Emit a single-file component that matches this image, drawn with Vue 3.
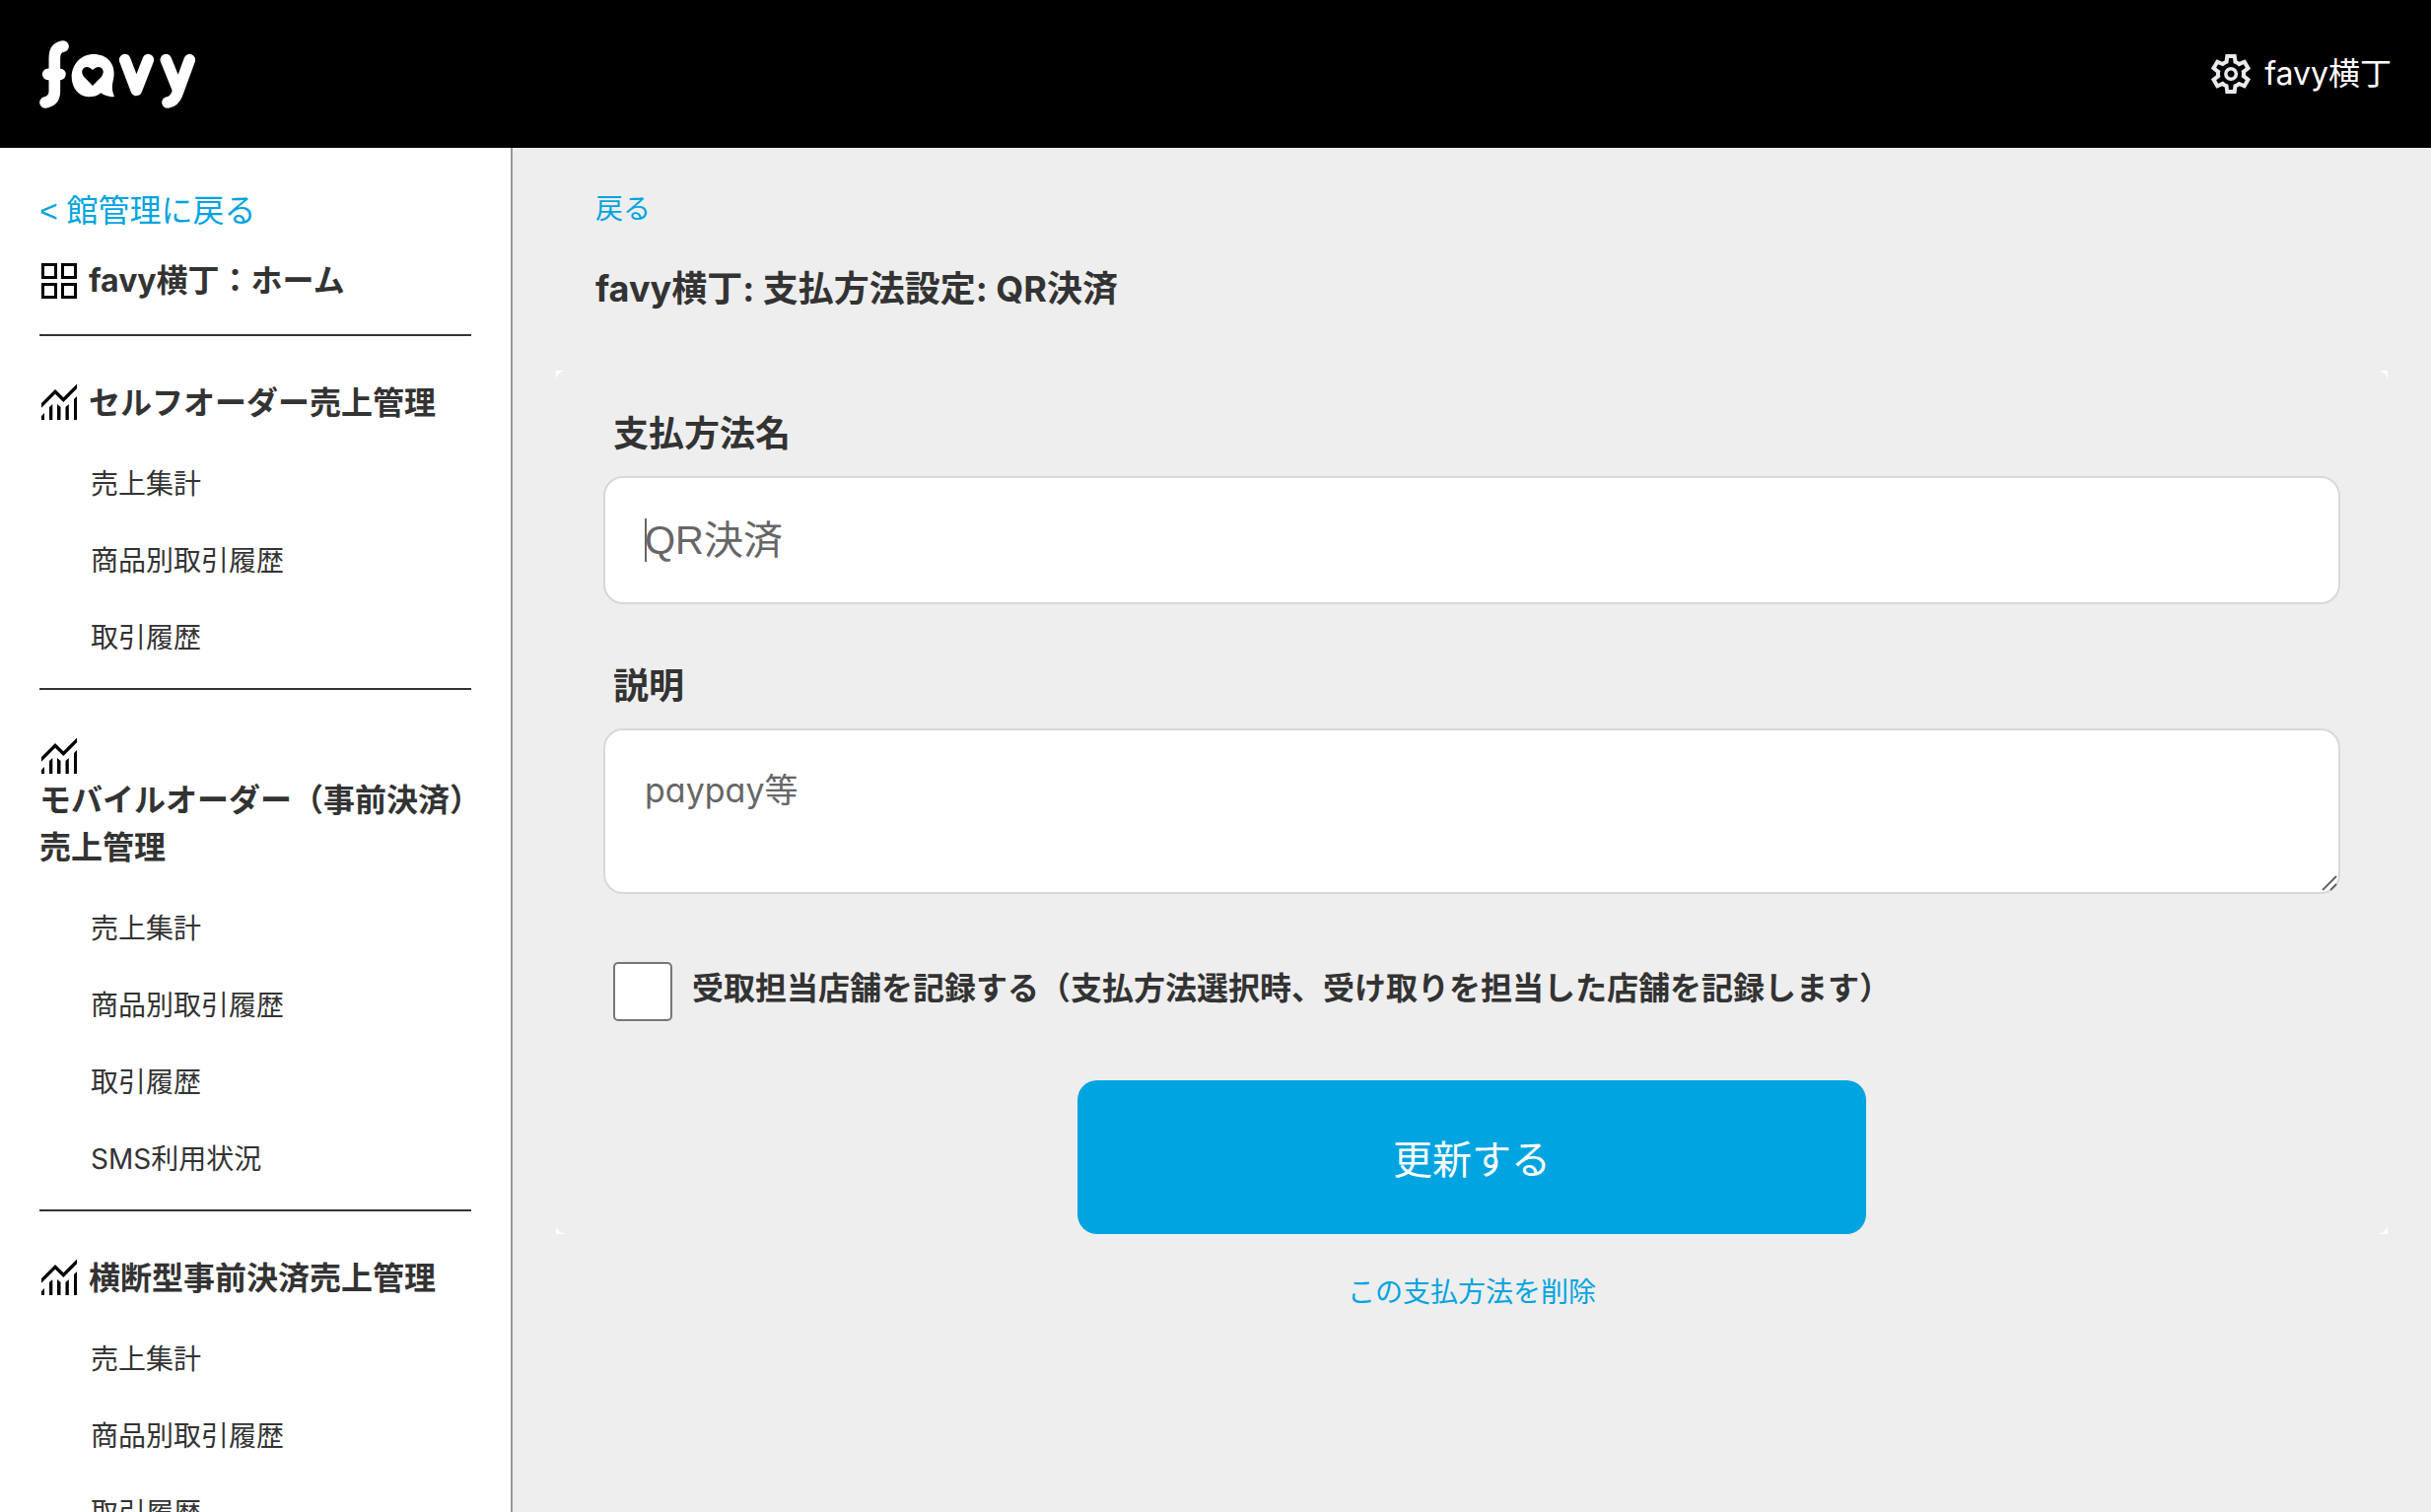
<script setup>
import { ref } from 'vue'

const sections = [
  { title: 'セルフオーダー売上管理', items: ['売上集計', '商品別取引履歴', '取引履歴'] },
  { title: 'モバイルオーダー（事前決済）売上管理', items: ['売上集計', '商品別取引履歴', '取引履歴', 'SMS利用状況'] },
  { title: '横断型事前決済売上管理', items: ['売上集計', '商品別取引履歴', '取引履歴'] }
]

const name = ref('')
const description = ref('')
const recordShop = ref(false)
</script>

<template>
  <div class="page">
    <header class="header">
      <a href="#" class="logo" aria-label="favy">
        <svg viewBox="30 30 474 207" width="158" height="69" fill="none" stroke="#fff" stroke-width="35" stroke-linecap="round" stroke-linejoin="round">
          <path d="M102 48Q76 52 76 84V184Q76 214 48 219M56 133H93" />
          <path d="M290 89L325 181L361 89M415 89L450 176M487 89L449 193Q440 216 420 219" />
          <path stroke="none" fill="#fff" fill-rule="evenodd" d="M195 72C236 72 258 100 257 132C256 158 245 168 258 201C243 203 230 199 217 190C206 199 194 202 180 202C148 201 128 172 128 142C128 103 156 72 195 72ZM192 168L165 140C149 118 173 99 192 120C211 99 235 118 219 140Z" />
        </svg>
      </a>
      <a href="#" class="account">
        <svg viewBox="80 -880 800 800" width="40" height="40" fill="#e8eaed">
          <path d="m370-80-16-128q-13-5-24.5-12T307-235l-119 50L78-375l103-78q-1-7-1-13.5v-27q0-6.5 1-13.5L78-585l110-190 119 50q11-8 23-15t24-12l16-128h220l16 128q13 5 24.5 12t22.5 15l119-50 110 190-103 78q1 7 1 13.500v27q0 6.500-2 13.500l103 78-110 190-118-50q-11 8-23 15t-24 12L590-80H370Zm70-80h79l14-106q31-8 57.500-23.500T639-327l99 41 39-68-86-65q5-14 7-29.500t2-31.500q0-16-2-31.500t-7-29.500l86-65-39-68-99 42q-22-23-48.500-38.500T533-694l-13-106h-79l-14 106q-31 8-57.500 23.500T321-633l-99-41-39 68 86 64q-5 15-7 30t-2 32q0 16 2 31t7 30l-86 65 39 68 99-42q22 23 48.500 38.500T427-266l13 106Zm42-180q58 0 99-41t41-99q0-58-41-99t-99-41q-59 0-99.500 41T342-480q0 58 40.500 99t99.500 41Zm0-70q-29 0-49.500-20.500T412-480q0-29 20.500-49.500T482-550q29 0 49.500 20.500T552-480q0 29-20.500 49.500T482-410Z" />
        </svg>
        <span>favy横丁</span>
      </a>
    </header>

    <div class="body">
      <nav class="sidebar">
        <div class="section top">
          <a href="#" class="back">&lt; 館管理に戻る</a>
          <a href="#" class="title">
            <svg class="icon" viewBox="0 0 40 40" fill="none" stroke="#000" stroke-width="3">
              <path d="M3.500 3.500h13v13h-13zM23.500 3.500h13v13h-13zM3.500 23.500h13v13h-13zM23.500 23.500h13v13h-13z" />
            </svg>
            <span>favy横丁：ホーム</span>
          </a>
        </div>
        <div v-for="section in sections" :key="section.title" class="section">
          <h2 class="title">
            <svg class="icon" viewBox="0 0 40 40">
              <path d="M2 20L16 6L24.300 14.300L38 0.600V5.300L24.300 19L16 10.700L2 24.700ZM2 37V33L5 30V37ZM10 37V24L13.300 21V37ZM18 37V21L21.500 24V37ZM26.500 37V24L29.800 21V37ZM35 37V16L38 13V37Z" />
            </svg>
            <span>{{ section.title }}</span>
          </h2>
          <ul class="items">
            <li v-for="item in section.items" :key="item"><a href="#">{{ item }}</a></li>
          </ul>
        </div>
      </nav>

      <main class="main">
        <a href="#" class="return">戻る</a>
        <h1>favy横丁: 支払方法設定: QR決済</h1>

        <div class="frame">
          <form class="form" @submit.prevent>
            <label class="caption" for="name">支払方法名</label>
            <div class="field">
              <input id="name" v-model="name" class="control" type="text" placeholder="QR決済">
              <span class="caret"></span>
            </div>
            <label class="caption" for="description">説明</label>
            <div class="field">
              <textarea id="description" v-model="description" class="control area" placeholder="paypay等"></textarea>
              <svg class="grip" viewBox="0 0 20 20" width="20" height="20" fill="none" stroke="#666" stroke-width="2">
                <path d="M2 16L16 2M10 16L16 10" />
              </svg>
            </div>
            <div class="check">
              <input id="record" v-model="recordShop" type="checkbox">
              <label for="record">受取担当店舗を記録する（支払方法選択時、受け取りを担当した店舗を記録します）</label>
            </div>
            <button type="submit" class="submit">更新する</button>
          </form>
        </div>
        <a href="#" class="delete">この支払方法を削除</a>
      </main>
    </div>
  </div>
</template>

<style>
body {
  margin: 0;
  background: #eee;
}
</style>

<style scoped>
.page {
  display: flex;
  flex-direction: column;
  height: 100vh;
  color: #333;
  font-family: Inter, "Noto Sans CJK JP", sans-serif;
  font-size: 28px;
  line-height: 42px;
}
a {
  color: inherit;
  text-decoration: none;
}
svg {
  display: block;
  flex: none;
}
.header {
  display: flex;
  flex: none;
  align-items: center;
  justify-content: space-between;
  box-sizing: border-box;
  height: 150px;
  padding: 0 40px;
  background: #000;
}
.account {
  display: flex;
  align-items: center;
  gap: 14px;
  color: #fff;
  font-size: 32px;
  line-height: 48px;
}
.body {
  display: flex;
  flex: 1;
  min-height: 0;
}
.sidebar {
  flex: none;
  box-sizing: border-box;
  width: 520px;
  padding: 40px 40px 0;
  overflow-y: auto;
  scrollbar-width: none;
  background: #fff;
  border-right: 2px solid #999;
}
.section {
  padding: 44px 0 30px;
  border-bottom: 2px solid #333;
}
.section.top {
  padding-top: 0;
}
.back {
  display: block;
  margin-bottom: 23px;
  color: #00a4e0;
  font-family: "Liberation Sans", "Noto Sans CJK JP", sans-serif;
  font-size: 32px;
  line-height: 48px;
}
.title {
  display: flex;
  flex-wrap: wrap;
  align-items: flex-start;
  column-gap: 10px;
  margin: 0;
  font-size: 32px;
  font-weight: 700;
  line-height: 48px;
}
.icon {
  width: 40px;
  height: 40px;
  margin-top: 4px;
}
.items {
  display: flex;
  flex-direction: column;
  gap: 36px;
  margin: 37px 0 0;
  padding: 0 0 0 52px;
  list-style: none;
}
.main {
  display: flex;
  flex: 1;
  flex-direction: column;
  min-width: 0;
  padding: 41px 44px;
  overflow-y: auto;
}
.return {
  align-self: flex-start;
  margin-left: 40px;
  color: #00a4e0;
}
h1 {
  margin: 33px 40px 56px;
  font-size: 36px;
  line-height: 54px;
}
.frame {
  background: #fff;
}
.form {
  display: flex;
  flex-direction: column;
  padding: 37px 48px 0;
  background: #eee;
  border-radius: 10px;
}
.caption {
  margin-bottom: 16px;
  padding-left: 10px;
  font-size: 36px;
  font-weight: 700;
  line-height: 54px;
}
.field {
  position: relative;
  margin-bottom: 56px;
}
.control {
  display: block;
  box-sizing: border-box;
  width: 100%;
  height: 130px;
  margin: 0;
  padding: 0 40px;
  color: #333;
  font-family: "Liberation Sans", "Noto Sans CJK JP", sans-serif;
  font-size: 40px;
  background: #fff;
  border: 2px solid #d8d8d8;
  border-radius: 20px;
  outline: none;
}
.control::placeholder {
  color: #666;
  opacity: 1;
}
.area {
  height: 168px;
  padding: 34px 40px;
  font-family: Inter, "Noto Sans CJK JP", sans-serif;
  font-feature-settings: "cv11";
  font-size: 34px;
  line-height: 54px;
  resize: vertical;
}
.area::-webkit-resizer {
  background: transparent;
}
.caret {
  position: absolute;
  top: 43px;
  left: 42px;
  width: 2px;
  height: 44px;
  background: #666;
}
.grip {
  position: absolute;
  right: 0;
  bottom: 0;
  pointer-events: none;
}
.check {
  display: flex;
  align-items: flex-start;
  gap: 20px;
  margin: 13px 0 60px 10px;
  font-size: 32px;
  font-weight: 700;
  line-height: 54px;
}
.check input {
  flex: none;
  appearance: none;
  box-sizing: border-box;
  width: 60px;
  height: 60px;
  margin: 0;
  background: #fff;
  border: 2px solid #767676;
  border-radius: 5px;
}
.check input:checked {
  background: #00a4e0;
}
.submit {
  align-self: center;
  width: 800px;
  max-width: 100%;
  height: 156px;
  padding: 0;
  color: #fff;
  font-family: inherit;
  font-size: 40px;
  background: #00a4e0;
  border: 0;
  border-radius: 20px;
}
.delete {
  align-self: center;
  margin-top: 38px;
  color: #00a4e0;
}
</style>
